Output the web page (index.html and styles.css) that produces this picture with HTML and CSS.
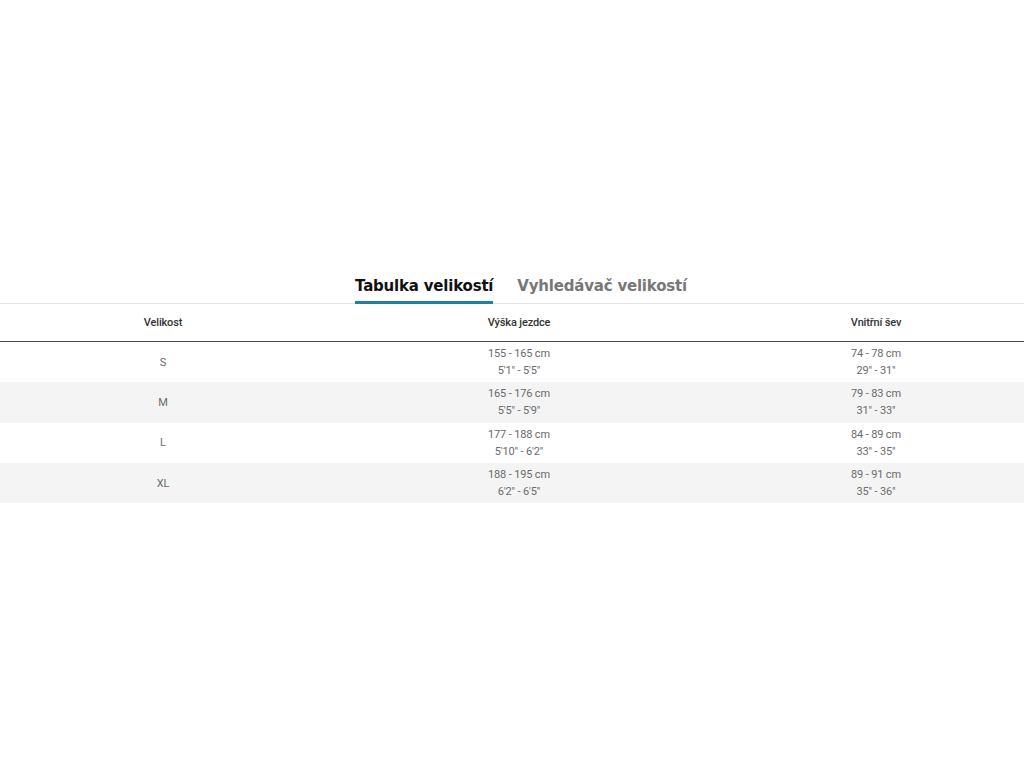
FILE: index.html
```html
<!DOCTYPE html>
<html lang="cs">
<head>
<meta charset="utf-8">
<title>Tabulka velikostí</title>
<link rel="stylesheet" href="styles.css">
</head>
<body>
<div class="sizes">
  <div class="tabs">
    <div class="tab active">Tabulka velikostí</div>
    <div class="tab">Vyhledávač velikostí</div>
  </div>
  <div class="table">
    <div class="row head">
      <div class="cell c1">Velikost</div>
      <div class="cell c2">Výška jezdce</div>
      <div class="cell c3">Vnitřní šev</div>
    </div>
    <div class="row">
      <div class="cell c1">S</div>
      <div class="cell c2">155 - 165 cm<br>5'1" - 5'5"</div>
      <div class="cell c3">74 - 78 cm<br>29" - 31"</div>
    </div>
    <div class="row alt">
      <div class="cell c1">M</div>
      <div class="cell c2">165 - 176 cm<br>5'5" - 5'9"</div>
      <div class="cell c3">79 - 83 cm<br>31" - 33"</div>
    </div>
    <div class="row">
      <div class="cell c1">L</div>
      <div class="cell c2">177 - 188 cm<br>5'10" - 6'2"</div>
      <div class="cell c3">84 - 89 cm<br>33" - 35"</div>
    </div>
    <div class="row alt">
      <div class="cell c1">XL</div>
      <div class="cell c2">188 - 195 cm<br>6'2" - 6'5"</div>
      <div class="cell c3">89 - 91 cm<br>35" - 36"</div>
    </div>
  </div>
</div>
</body>
</html>
```

FILE: styles.css
```css
html, body {
  margin: 0;
  padding: 0;
  background: #fff;
}

.sizes {
  padding-top: 272px;
}

.tabs {
  display: flex;
  justify-content: center;
  gap: 24px;
  padding-left: 18px;
  border-bottom: 1px solid #e4e4e4;
  font-family: "DejaVu Sans", sans-serif;
  font-weight: bold;
  font-size: 15px;
}

.tab {
  color: #777;
  padding: 5px 0 6px;
  line-height: 18px;
  border-bottom: 3px solid transparent;
  margin-bottom: -1px;
  letter-spacing: -0.2px;
}

.tab.active {
  color: #111;
  border-bottom-color: #1f7fa8;
}

.table {
  font-family: Roboto, "Liberation Sans", sans-serif;
  font-size: 11px;
  color: #6a6a6a;
}

.row {
  display: grid;
  grid-template-columns: 326px 386px 1fr;
  align-items: center;
  height: 40.3px;
}

.row.alt {
  background: #f4f4f4;
}

.row.head {
  height: 37px;
  border-bottom: 1px solid #4a4a4a;
  color: #333;
  font-weight: 500;
}

.cell {
  text-align: center;
  line-height: 17px;
  letter-spacing: -0.15px;
}

.c3 {
  padding-left: 16px;
}
```
